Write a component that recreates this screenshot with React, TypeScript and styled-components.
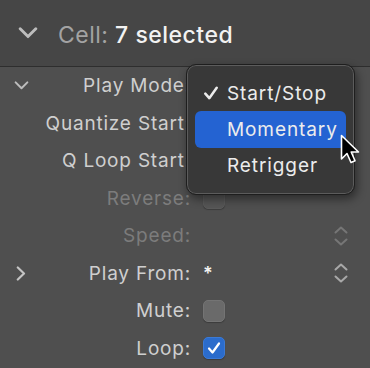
import React from 'react';
import styled, { createGlobalStyle } from 'styled-components';

const Global = createGlobalStyle`
    html, body {
        margin: 0;
        padding: 0;
        background: #4f4f4f;
    }
    body {
        font-family: Inter, "Noto Sans", "Liberation Sans", sans-serif;
        -webkit-font-smoothing: antialiased;
    }
`;

const Panel = styled.div`
    position: relative;
    width: 370px;
    height: 368px;
    overflow: hidden;
    background: #4f4f4f;
`;

const Header = styled.div`
    height: 67px;
    display: flex;
    align-items: center;
    gap: 20px;
    padding: 0 0 0 18px;
    background: #464646;
    border-bottom: 1px solid #2e2e2e;
    box-sizing: border-box;
    & svg {
        flex: none;
    }
`;

const Title = styled.div`
    padding-top: 3px;
    font-size: 23px;
    letter-spacing: 0.5px;
    color: #f2f2f2;
    font-weight: 500;
    & span {
        color: #a3a3a3;
        font-weight: 400;
    }
`;

const Rows = styled.div`
    display: flex;
    flex-direction: column;
`;

const Row = styled.div`
    height: 37.5px;
    display: grid;
    grid-template-columns: 41px 150px 1fr 29px 15px;
    align-items: center;
`;

const Toggle = styled.div`
    display: flex;
    justify-content: center;
    padding-left: 1px;
`;

const Label = styled.div<{ $dim?: boolean }>`
    text-align: right;
    white-space: nowrap;
    font-size: 19px;
    letter-spacing: 0.8px;
    color: ${p => (p.$dim ? '#7c7c7c' : '#cfcfcf')};
`;

const Value = styled.div`
    display: flex;
    align-items: center;
    padding-left: 12px;
    font-size: 18px;
    color: #f4f4f4;
    font-weight: 600;
`;

const Check = styled.div<{ $on?: boolean; $dim?: boolean }>`
    width: 22px;
    height: 22px;
    border-radius: 5px;
    box-sizing: border-box;
    display: flex;
    align-items: center;
    justify-content: center;
    background: ${p => (p.$on ? '#2b6ccc' : p.$dim ? '#555555' : '#6a6a6a')};
    border: 1px solid ${p => (p.$on ? '#3b7ad6' : p.$dim ? '#5a5a5a' : '#747474')};
    box-shadow: 0 1px 1px rgba(0, 0, 0, 0.25);
`;

const Stepper = styled.div<{ $dim?: boolean }>`
    display: flex;
    justify-content: center;
    color: ${p => (p.$dim ? '#767676' : '#a8a8a8')};
`;

const Menu = styled.div`
    position: absolute;
    left: 186px;
    top: 64px;
    width: 169px;
    height: 131px;
    box-sizing: border-box;
    padding: 10px 8px;
    border-radius: 10px;
    background: #383838;
    border: 1px solid #1e1e1e;
    box-shadow: inset 0 0 0 1px #5c5c5c, 2px 4px 10px rgba(0, 0, 0, 0.45);
    display: flex;
    flex-direction: column;
`;

const Item = styled.div<{ $active?: boolean }>`
    height: 37px;
    display: grid;
    grid-template-columns: 32px 1fr;
    align-items: center;
    border-radius: 6px;
    font-size: 19px;
    letter-spacing: 0.9px;
    color: #ececec;
    background: ${p => (p.$active ? '#2463d2' : 'transparent')};
`;

const Mark = styled.div`
    display: flex;
    justify-content: flex-end;
    padding-right: 8px;
`;

const Cursor = styled.svg`
    position: absolute;
    left: 340px;
    top: 134px;
`;

const ChevronDown = ({ size = 16, color = '#bdbdbd', w = 2.2 }) => (
    <svg width={size} height={size * 0.6} viewBox="0 0 16 10">
        <path d="M1.5 1.5 L8 8 L14.5 1.5" fill="none" stroke={color} strokeWidth={w} strokeLinecap="round" strokeLinejoin="round" />
    </svg>
);

const ChevronRight = () => (
    <svg width="10" height="15" viewBox="0 0 10 15">
        <path d="M1.8 1.5 L8 7.5 L1.8 13.5" fill="none" stroke="#c4c4c4" strokeWidth="2.2" strokeLinecap="round" strokeLinejoin="round" />
    </svg>
);

const UpDown = () => (
    <svg width="14" height="20" viewBox="0 0 14 20">
        <path d="M1.5 6.5 L7 1.5 L12.5 6.5" fill="none" stroke="currentColor" strokeWidth="2" strokeLinecap="round" strokeLinejoin="round" />
        <path d="M1.5 13.5 L7 18.5 L12.5 13.5" fill="none" stroke="currentColor" strokeWidth="2" strokeLinecap="round" strokeLinejoin="round" />
    </svg>
);

const Tick = ({ color = '#ffffff', size = 14 }) => (
    <svg width={size} height={size} viewBox="0 0 14 14">
        <path d="M2 7.5 L5.5 11.5 L12 2.5" fill="none" stroke={color} strokeWidth="2.2" strokeLinecap="round" strokeLinejoin="round" />
    </svg>
);

interface RowData {
    label: string;
    dim?: boolean;
    toggle?: 'down' | 'right';
    check?: 'off' | 'on' | 'dim';
    value?: string;
    stepper?: boolean;
}

const rows: RowData[] = [
    { label: 'Play Mode:', toggle: 'down' },
    { label: 'Quantize Start:' },
    { label: 'Q Loop Start:' },
    { label: 'Reverse:', dim: true, check: 'dim' },
    { label: 'Speed:', dim: true, stepper: true },
    { label: 'Play From:', toggle: 'right', value: '*', stepper: true },
    { label: 'Mute:', check: 'off' },
    { label: 'Loop:', check: 'on' },
];

const App: React.FC = () => {
    return (
        <Panel>
            <Global />
            <Header>
                <ChevronDown size={20} w={2.4} />
                <Title>
                    <span>Cell:</span> 7 selected
                </Title>
            </Header>
            <Rows>
                {rows.map(r => (
                    <Row key={r.label}>
                        <Toggle>
                            {r.toggle === 'down' && <ChevronDown size={15} />}
                            {r.toggle === 'right' && <ChevronRight />}
                        </Toggle>
                        <Label $dim={r.dim}>{r.label}</Label>
                        <Value>
                            {r.check && (
                                <Check $on={r.check === 'on'} $dim={r.check === 'dim'}>
                                    {r.check === 'on' && <Tick />}
                                </Check>
                            )}
                            {r.value}
                        </Value>
                        <Stepper $dim={r.dim}>{r.stepper && <UpDown />}</Stepper>
                        <div />
                    </Row>
                ))}
            </Rows>
            <Menu>
                <Item>
                    <Mark>
                        <Tick color="#ececec" size={16} />
                    </Mark>
                    Start/Stop
                </Item>
                <Item $active>
                    <Mark />
                    Momentary
                </Item>
                <Item>
                    <Mark />
                    Retrigger
                </Item>
            </Menu>
            <Cursor width="24" height="34" viewBox="0 0 24 34">
                <path d="M1.5 1.5 L1.5 25 L7 19.5 L11 28.5 L15 26.8 L11.2 18 L18.5 18 Z" fill="#000" stroke="#fff" strokeWidth="1.6" strokeLinejoin="round" />
            </Cursor>
        </Panel>
    );
};

export default App;
